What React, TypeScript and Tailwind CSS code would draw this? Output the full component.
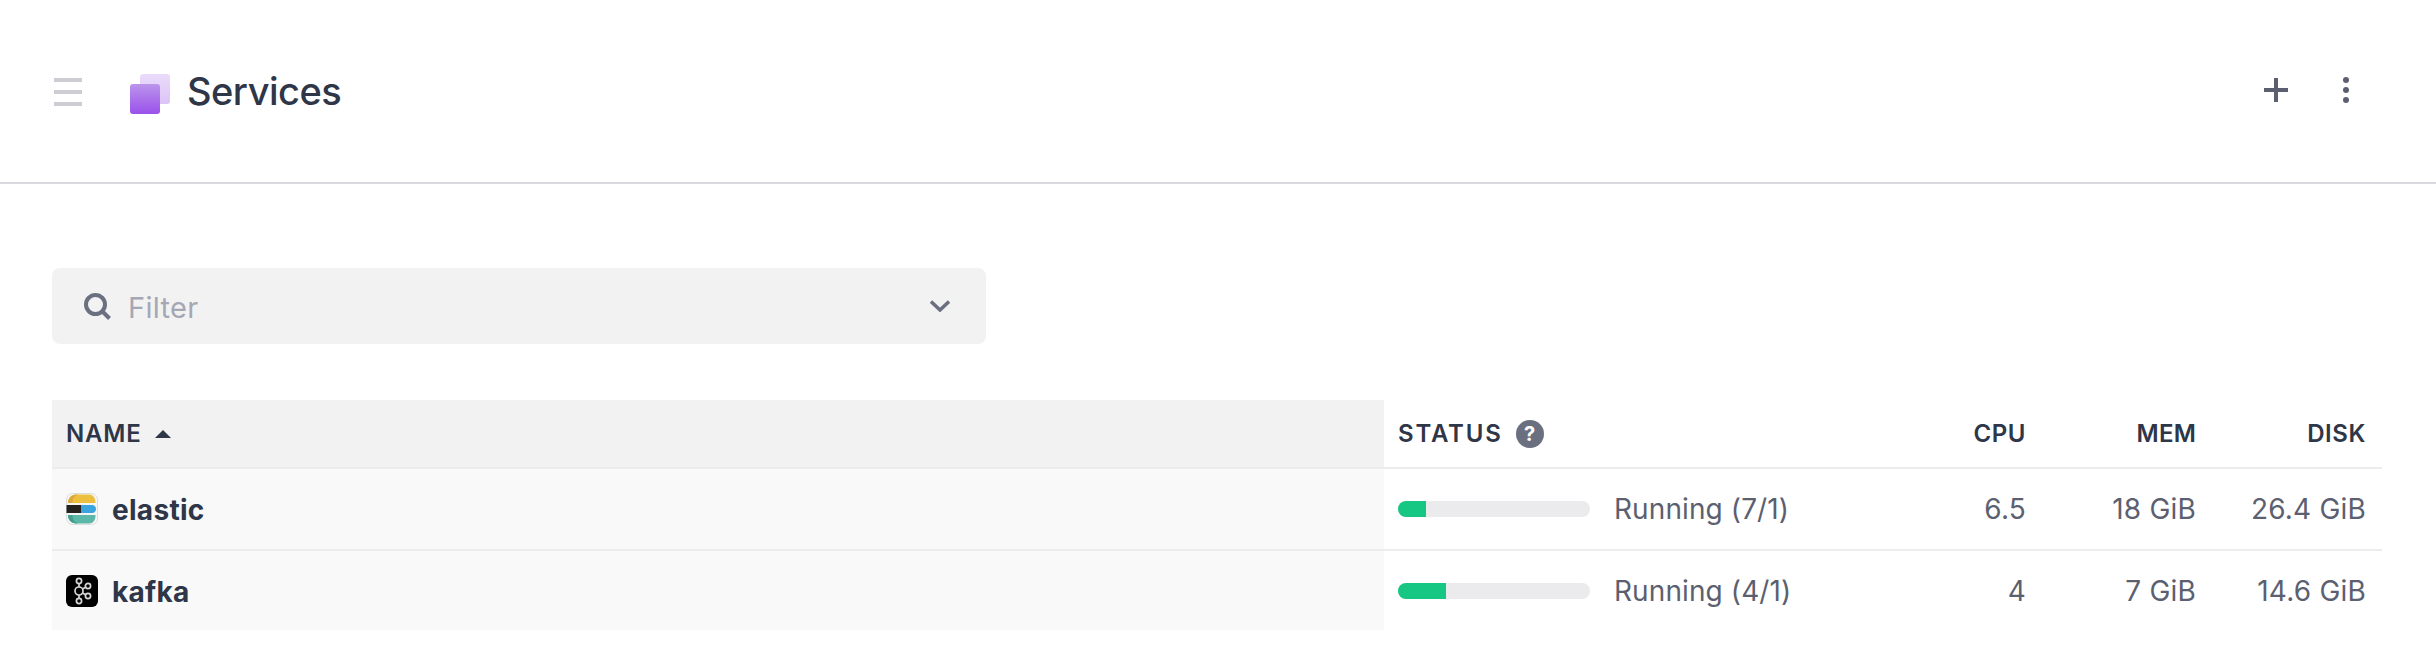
const rows = [
  { name: "elastic", icon: "elastic", fill: 28, status: "Running (7/1)", cpu: "6.5", mem: "18 GiB", disk: "26.4 GiB" },
  { name: "kafka", icon: "kafka", fill: 48, status: "Running (4/1)", cpu: "4", mem: "7 GiB", disk: "14.6 GiB" },
];

function ElasticIcon() {
  return (
    <svg width="32" height="32" viewBox="0 0 32 32" className="block shrink-0">
      <rect x="0.5" y="0.5" width="31" height="31" rx="6" fill="#f6f6f6" stroke="#dddddd" />
      <path d="M2 10C2 4 6 1.500 12 1.500H23C27 1.500 29.500 4.500 29.500 10Z" fill="#edbf41" />
      <path d="M2 10C2 4 6 1.500 12 1.500C8 3 6.500 6 6.500 10Z" fill="#dca83a" />
      <path d="M0.500 12H15V20H0.500Z" fill="#25211f" />
      <path d="M15 12H26C28.500 12 30 14 30 16C30 18 28.500 20 26 20H15Z" fill="#3ba3dd" />
      <path d="M2 22H29.500C29.500 27.500 27 30.500 23 30.500H12C6 30.500 2 28 2 22Z" fill="#5bb8a8" />
      <path d="M2 22H6.500C6.500 26 8 29 12 30.500C6 30.500 2 28 2 22Z" fill="#459d8e" />
    </svg>
  );
}

function KafkaIcon() {
  return (
    <svg width="32" height="32" viewBox="0 0 32 32" className="block shrink-0">
      <rect width="32" height="32" rx="6" fill="#000000" />
      <g fill="none" stroke="#d6d6d6" strokeWidth="1.700">
        <path d="M13 8.500V12M13 20V23.500M16.500 14L20 12M16.500 18L20 20" />
        <circle cx="13" cy="6" r="2.600" />
        <circle cx="13" cy="16" r="4" />
        <circle cx="13" cy="26" r="2.600" />
        <circle cx="22" cy="11" r="2.600" />
        <circle cx="22" cy="21" r="2.600" />
      </g>
    </svg>
  );
}

export default function App() {
  return (
    <div className="min-h-[648px] bg-white font-['Inter','Liberation_Sans',sans-serif] text-[#2e3648]">
      <header className="flex h-[184px] items-start border-b-2 border-[#d8d8de] pl-[54px] pr-[87px]">
        <svg width="28" height="28" viewBox="0 0 28 28" className="mt-[78px] shrink-0" fill="#cdcdd3">
          <rect width="28" height="4" />
          <rect y="12" width="28" height="4" />
          <rect y="24" width="28" height="4" />
        </svg>
        <svg width="40" height="40" viewBox="0 0 40 40" className="ml-[48px] mt-[74px] shrink-0">
          <defs>
            <linearGradient id="front" x1="0" y1="0" x2="0" y2="1">
              <stop offset="0" stopColor="#bb95ec" />
              <stop offset="1" stopColor="#9a50ea" />
            </linearGradient>
            <linearGradient id="back" x1="0" y1="0" x2="0" y2="1">
              <stop offset="0" stopColor="#eadbfa" />
              <stop offset="1" stopColor="#dcc4f6" />
            </linearGradient>
          </defs>
          <rect x="10" width="30" height="30" rx="3" fill="url(#back)" />
          <rect y="10" width="30" height="30" rx="3" fill="url(#front)" />
        </svg>
        <h1 className="ml-[17px] mt-[68px] text-[38px] leading-[46px] font-medium tracking-[-0.5px]">Services</h1>
        <div className="ml-auto flex items-start">
          <svg width="24" height="24" viewBox="0 0 24 24" className="mt-[78px]" fill="#5c5f70">
            <rect x="10" width="4" height="24" />
            <rect y="10" width="24" height="4" />
          </svg>
          <svg width="6" height="26" viewBox="0 0 6 26" className="ml-[55px] mt-[77px]" fill="#5c5f70">
            <circle cx="3" cy="3" r="3" />
            <circle cx="3" cy="13" r="3" />
            <circle cx="3" cy="23" r="3" />
          </svg>
        </div>
      </header>

      <main className="pl-[52px] pr-[54px] pt-[84px]">
        <div className="flex h-[76px] w-[934px] items-center rounded-lg bg-[#f2f2f3] pl-[32px] pr-[36px]">
          <svg width="27" height="27" viewBox="0 0 27 27" fill="none" stroke="#6b7080" strokeWidth="4" className="shrink-0">
            <circle cx="11.500" cy="11.500" r="9.500" />
            <path d="M18.500 18.500L25.500 25.500" />
          </svg>
          <span className="ml-[17px] mt-[2px] text-[29px] leading-none tracking-[0.3px] text-[#a5a8b4]">Filter</span>
          <svg width="20" height="12" viewBox="0 0 20 12" fill="none" stroke="#6b7080" strokeWidth="3.500" className="ml-auto">
            <path d="M1 1.500L10 10L19 1.500" />
          </svg>
        </div>

        <table className="mt-[56px] w-[2330px] table-fixed border-collapse">
          <colgroup>
            <col className="w-[1332px]" />
            <col className="w-[488px]" />
            <col className="w-[170px]" />
            <col className="w-[170px]" />
            <col className="w-[170px]" />
          </colgroup>
          <thead>
            <tr className="h-[68px] border-b-2 border-[#ececee] text-[24px] font-semibold">
              <th className="bg-[#f2f2f3] pl-[14px] text-left font-semibold">
                <span className="flex items-center tracking-[0.8px]">
                  NAME
                  <svg width="16" height="8" viewBox="0 0 16 8" fill="#2e3648" className="ml-[13px]">
                    <path d="M8 0L16 8H0Z" />
                  </svg>
                </span>
              </th>
              <th className="pl-[14px] text-left font-semibold">
                <span className="flex items-center tracking-[1.800px]">
                  STATUS
                  <span className="ml-[13px] flex h-[28px] w-[28px] items-center justify-center rounded-full bg-[#6b7080] text-[20px] font-bold leading-none tracking-normal text-white">?</span>
                </span>
              </th>
              <th className="pr-[16px] text-right font-semibold tracking-[0.6px]">CPU</th>
              <th className="pr-[16px] text-right font-semibold tracking-[0.2px]">MEM</th>
              <th className="pr-[16px] text-right font-semibold tracking-[0.6px]">DISK</th>
            </tr>
          </thead>
          <tbody className="text-[28px] text-[#5c5f70]">
            {rows.map((r, i) => (
              <tr key={r.name} className={i === 0 ? "h-[82px] border-b-2 border-[#ececee]" : "h-[80px]"}>
                <td className="bg-[#f9f9f9] pl-[14px]">
                  <span className="flex items-center gap-[14px] text-[28px] font-bold tracking-[0.3px] text-[#2e3648]">
                    {r.icon === "elastic" ? <ElasticIcon /> : <KafkaIcon />}
                    <span className="mt-[2px]">{r.name}</span>
                  </span>
                </td>
                <td className="pl-[14px]">
                  <span className="flex items-center">
                    <span className="block h-[16px] w-[192px] overflow-hidden rounded-full bg-[#ebebed]">
                      <span className="block h-full bg-[#16c784]" style={{ width: r.fill }} />
                    </span>
                    <span className="ml-[24px] tracking-[0.1px]">{r.status}</span>
                  </span>
                </td>
                <td className="pr-[16px] text-right tracking-[0.2px]">{r.cpu}</td>
                <td className="pr-[16px] text-right tracking-[0.2px]">{r.mem}</td>
                <td className="pr-[16px] text-right tracking-[0.2px]">{r.disk}</td>
              </tr>
            ))}
          </tbody>
        </table>
      </main>
    </div>
  );
}
